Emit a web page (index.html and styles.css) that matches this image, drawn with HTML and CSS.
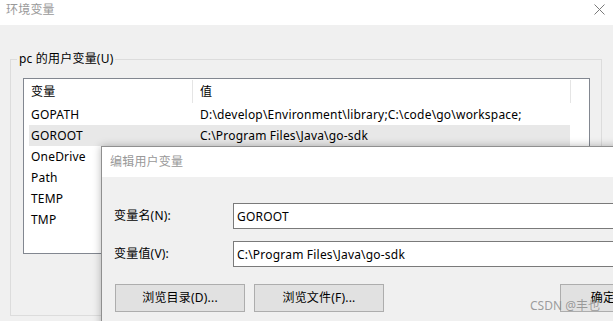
FILE: index.html
```html
<!doctype html>
<html>
<head>
<meta charset="utf-8">
<title>环境变量</title>
<link rel="stylesheet" href="styles.css">
</head>
<body>
<div class="win">
	<div class="title">
		<span>环境变量</span>
		<svg class="close" width="11" height="11" viewBox="0 0 11 11"><path d="M0.5 0.5L10.5 10.5M10.5 0.5L0.5 10.5" stroke="#7a7a7a" stroke-width="1" fill="none"/></svg>
	</div>
	<div class="main">
		<fieldset class="group">
			<legend>pc 的用户变量(U)</legend>
			<div class="list">
				<div class="head">
					<span class="c1">变量</span>
					<span class="c2">值</span>
				</div>
				<ul>
					<li><span class="c1">GOPATH</span><span class="c2">D:\develop\Environment\library;C:\code\go\workspace;</span></li>
					<li class="on"><span class="c1">GOROOT</span><span class="c2">C:\Program Files\Java\go-sdk</span></li>
					<li><span class="c1">OneDrive</span><span class="c2">C:\Users\pc\OneDrive</span></li>
					<li><span class="c1">Path</span><span class="c2">%USERPROFILE%\AppData\Local\Microsoft\WindowsApps;</span></li>
					<li><span class="c1">TEMP</span><span class="c2">%USERPROFILE%\AppData\Local\Temp</span></li>
					<li><span class="c1">TMP</span><span class="c2">%USERPROFILE%\AppData\Local\Temp</span></li>
				</ul>
			</div>
		</fieldset>
	</div>
</div>

<div class="dlg">
	<div class="dlg-title">编辑用户变量</div>
	<div class="dlg-body">
		<div class="field">
			<label>变量名(N):</label>
			<input type="text" value="GOROOT" readonly>
		</div>
		<div class="field">
			<label>变量值(V):</label>
			<input type="text" value="C:\Program Files\Java\go-sdk" readonly>
		</div>
		<div class="btns">
			<button>浏览目录(D)...</button>
			<button>浏览文件(F)...</button>
			<button class="ok">确定</button>
		</div>
	</div>
</div>

<div class="mark">CSDN @丰也</div>
</body>
</html>
```

FILE: styles.css
```css
*{margin:0; padding:0; list-style:none; box-sizing:border-box;}
body{width:613px; height:321px; overflow:hidden; position:relative; background:#f0f0f0; color:#000; font:12px/16px "Noto Sans","Noto Sans CJK SC",sans-serif; letter-spacing:0.2px;}

.title{height:25px; background:#fff; color:#999; display:flex; align-items:flex-start; justify-content:space-between; padding:2px 8px 0 6px;}
.title .close{margin-top:2px;}

.main{padding-top:26px;}
.group{margin:0 11px 0 10px; border:1px solid #dcdcdc; padding:11px 11px 61px 6px; min-width:0;}
.group legend{padding:0 2px; line-height:16px;}

.list{margin-left:6px; height:176px; border:1px solid #828790; background:#fff; overflow:hidden;}
.head{height:25px; display:flex;}
.head span{height:23px; margin-top:1px; line-height:23px; padding-left:7px; border-right:1px solid #e5e5e5;}
.head .c1{width:169px;}
.head .c2{width:378px;}

.list ul{margin-left:5px;}
.list li{width:541px; height:21px; line-height:21px; display:flex; white-space:nowrap;}
.list li.on{background:#e8e8e8;}
.list li .c1{width:164px; padding-left:2px;}
.list li .c2{padding-left:7px; overflow:hidden;}

.dlg{position:absolute; left:101px; top:146px; width:558px; height:200px; border:1px solid #8f8f8f; background:#f0f0f0; box-shadow:0 0 8px rgba(0,0,0,0.28);}
.dlg-title{height:30px; line-height:30px; padding-left:8px; background:#fff; color:#999;}
.dlg-body{padding:26px 12px 0;}
.field{display:flex; align-items:center; height:26px;}
.field + .field{margin-top:12px;}
.field label{width:119px;}
.field input{flex:1; height:26px; border:1px solid #7a7a7a; background:#fff; padding-left:3px; font:inherit; letter-spacing:inherit; color:#000; outline:none;}

.btns{display:flex; gap:9px; margin-top:17px; padding-left:1px;}
.btns button{width:130px; height:28px; border:1px solid #adadad; background:#e1e1e1; font:inherit; letter-spacing:inherit; color:#000;}
.btns .ok{width:86px; margin-left:auto;}

.mark{position:absolute; left:530px; top:298px; color:rgba(140,140,140,0.85); font-size:12px; line-height:16px; letter-spacing:0;}
```
